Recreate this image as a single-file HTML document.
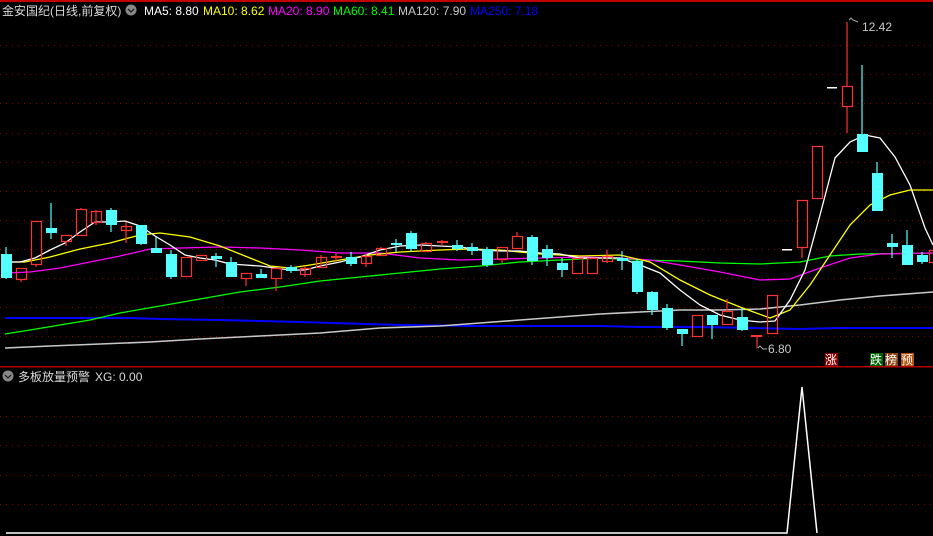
<!DOCTYPE html>
<html><head><meta charset="utf-8"><style>
html,body{margin:0;padding:0;background:#000;width:933px;height:536px;overflow:hidden}
svg{display:block}
text{font-family:"Liberation Sans","Noto Sans CJK SC",sans-serif;font-size:12px}
</style></head><body>
<svg width="933" height="536" viewBox="0 0 933 536" xmlns="http://www.w3.org/2000/svg">
<rect x="0" y="0" width="933" height="536" fill="#000"/>
<rect x="0" y="0" width="933" height="2" fill="#c00000"/>
<g stroke="#900000" stroke-width="1" stroke-dasharray="1,5">
<line x1="0" y1="45.5" x2="933" y2="45.5"/><line x1="0" y1="74.5" x2="933" y2="74.5"/><line x1="0" y1="103.5" x2="933" y2="103.5"/><line x1="0" y1="133.5" x2="933" y2="133.5"/><line x1="0" y1="162.5" x2="933" y2="162.5"/><line x1="0" y1="191.5" x2="933" y2="191.5"/><line x1="0" y1="220.5" x2="933" y2="220.5"/><line x1="0" y1="249.5" x2="933" y2="249.5"/><line x1="0" y1="278.5" x2="933" y2="278.5"/><line x1="0" y1="307.5" x2="933" y2="307.5"/><line x1="0" y1="336.5" x2="933" y2="336.5"/>
<line x1="0" y1="416.5" x2="933" y2="416.5"/><line x1="0" y1="445.5" x2="933" y2="445.5"/><line x1="0" y1="475.5" x2="933" y2="475.5"/><line x1="0" y1="504.5" x2="933" y2="504.5"/>
</g>
<rect x="0" y="366" width="933" height="1.5" fill="#b00000"/>

<g fill="none" stroke-width="1.3">
<polyline stroke="#0000ff" stroke-width="2" points="5,318 130,318 160,319 220,320 300,322 400,325 480,326 600,326 640,327 700,327 800,329 840,328 933,328"/>
<polyline stroke="#c8c8c8" stroke-width="1.6" points="5,348 50,346 100,344 150,342 200,339 260,336 320,333 380,328 440,326 480,323 520,320 560,317 600,314 640,312 680,310 720,310 760,309 800,305 840,300 880,296 933,292"/>
<polyline stroke="#00ff00" points="5,334 30,330 60,325 90,320 120,313 160,306 200,299 240,292 280,287 320,281 360,277 400,273 440,269 480,266 520,262 560,260 600,258 640,260 680,261 720,263 760,264 800,262 830,256 860,254 933,253"/>
<polyline stroke="#ff00ff" points="5,273 30,272 60,268 90,262 120,256 150,249 180,248 220,247 260,248 300,250 340,253 380,253 420,258 460,260 500,259 540,258 580,257 620,258 650,260 680,265 720,272 760,280 790,279 820,268 850,258 880,254 933,253"/>
<polyline stroke="#ffff00" points="5,262 25,262 50,257 80,249 110,243 140,235 160,233 190,237 220,246 250,258 270,266 290,268 310,265 340,260 370,255 400,252 440,250 470,249 500,250 540,254 580,256 620,255 650,262 680,280 710,295 740,307 770,318 790,310 810,285 830,255 850,225 870,205 890,195 910,190 933,190"/>
<polyline stroke="#ffffff" points="5,262 20,262 35,258 50,250 65,243 80,232 95,222 110,222 125,221 140,226 155,236 170,245 185,255 200,258 215,260 230,264 245,265 260,266 275,268 290,270 305,270 320,266 340,262 360,257 380,250 400,246 420,245 440,246 460,247 480,250 500,251 520,251 540,253 560,254 580,258 600,258 620,258 640,265 660,273 680,290 700,305 720,315 740,320 760,322 775,321 790,300 805,270 820,215 835,158 850,142 865,135 880,138 895,157 910,185 925,228 933,245"/>
</g>

<g stroke="#54ffff" stroke-width="1.2">
<line x1="6" y1="247" x2="6" y2="279"/><line x1="51" y1="203" x2="51" y2="239"/><line x1="111" y1="208" x2="111" y2="232"/><line x1="141" y1="225" x2="141" y2="245"/><line x1="156" y1="237" x2="156" y2="253"/><line x1="171" y1="250" x2="171" y2="279"/><line x1="216" y1="253" x2="216" y2="267"/><line x1="231" y1="257" x2="231" y2="277"/><line x1="261" y1="269" x2="261" y2="278"/><line x1="291" y1="265" x2="291" y2="273"/><line x1="351" y1="252" x2="351" y2="266"/><line x1="396" y1="239" x2="396" y2="252"/><line x1="411" y1="231" x2="411" y2="252"/><line x1="457" y1="240" x2="457" y2="251"/><line x1="472" y1="243" x2="472" y2="255"/><line x1="487" y1="247" x2="487" y2="267"/><line x1="532" y1="235" x2="532" y2="265"/><line x1="547" y1="245" x2="547" y2="266"/><line x1="562" y1="258" x2="562" y2="277"/><line x1="622" y1="251" x2="622" y2="270"/><line x1="637" y1="259" x2="637" y2="294"/><line x1="652" y1="291" x2="652" y2="315"/><line x1="667" y1="304" x2="667" y2="330"/><line x1="682" y1="329" x2="682" y2="346"/><line x1="712" y1="315" x2="712" y2="339"/><line x1="742" y1="308" x2="742" y2="331"/><line x1="862" y1="65" x2="862" y2="152"/><line x1="877" y1="162" x2="877" y2="211"/><line x1="892" y1="234" x2="892" y2="258"/><line x1="907" y1="230" x2="907" y2="265"/><line x1="922" y1="252" x2="922" y2="264"/>
</g>
<g fill="#54ffff">
<rect x="1" y="254" width="11" height="24"/><rect x="46" y="228" width="11" height="5"/><rect x="106" y="210" width="11" height="15"/><rect x="136" y="225" width="11" height="19"/><rect x="151" y="248" width="11" height="5"/><rect x="166" y="254" width="11" height="23"/><rect x="211" y="256" width="11" height="3"/><rect x="226" y="262" width="11" height="15"/><rect x="256" y="274" width="11" height="4"/><rect x="286" y="267" width="11" height="4"/><rect x="346" y="257" width="11" height="7"/><rect x="391" y="243" width="11" height="2"/><rect x="406" y="233" width="11" height="16"/><rect x="452" y="245" width="11" height="4"/><rect x="467" y="247" width="11" height="4"/><rect x="482" y="249" width="11" height="16"/><rect x="527" y="237" width="11" height="24"/><rect x="542" y="249" width="11" height="9"/><rect x="557" y="263" width="11" height="7"/><rect x="617" y="258" width="11" height="3"/><rect x="632" y="261" width="11" height="31"/><rect x="647" y="292" width="11" height="18"/><rect x="662" y="308" width="11" height="20"/><rect x="677" y="329" width="11" height="5"/><rect x="707" y="315" width="11" height="10"/><rect x="737" y="317" width="11" height="13"/><rect x="857" y="134" width="11" height="18"/><rect x="872" y="173" width="11" height="38"/><rect x="887" y="243" width="11" height="4"/><rect x="902" y="245" width="11" height="20"/><rect x="917" y="255" width="11" height="7"/>
</g>
<g stroke="#ff3232" stroke-width="1.2" fill="none">
<line x1="21" y1="279" x2="21" y2="282"/><line x1="36" y1="264" x2="36" y2="267"/><line x1="66" y1="241" x2="66" y2="246"/><line x1="81" y1="208" x2="81" y2="209"/><line x1="96" y1="210" x2="96" y2="225"/><line x1="126" y1="222" x2="126" y2="243"/><line x1="246" y1="278" x2="246" y2="286"/><line x1="276" y1="278" x2="276" y2="291"/><line x1="305" y1="266" x2="305" y2="277"/><line x1="321" y1="255" x2="321" y2="267"/><line x1="336" y1="253" x2="336" y2="262"/><line x1="366" y1="254" x2="366" y2="267"/><line x1="381" y1="247" x2="381" y2="248"/><line x1="426" y1="242" x2="426" y2="243"/><line x1="442" y1="240" x2="442" y2="246"/><line x1="502" y1="259" x2="502" y2="263"/><line x1="517" y1="232" x2="517" y2="236"/><line x1="607" y1="250" x2="607" y2="263"/><line x1="727" y1="299" x2="727" y2="311"/><line x1="757" y1="336" x2="757" y2="348"/><line x1="802" y1="247" x2="802" y2="258"/><line x1="847" y1="22" x2="847" y2="86"/><line x1="847" y1="106" x2="847" y2="133"/>
<rect x="16.5" y="268.5" width="10" height="11"/><rect x="31.5" y="221.5" width="10" height="43"/><rect x="61.5" y="235.5" width="10" height="6"/><rect x="76.5" y="209.5" width="10" height="26"/><rect x="91.5" y="211.5" width="10" height="11"/><rect x="121.5" y="226.5" width="10" height="4"/><rect x="181.5" y="257.5" width="10" height="19"/><rect x="196.5" y="255.5" width="10" height="5"/><rect x="241.5" y="273.5" width="10" height="5"/><rect x="271.5" y="268.5" width="10" height="10"/><rect x="300.5" y="268.5" width="10" height="6"/><rect x="316.5" y="257.5" width="10" height="10"/><rect x="361.5" y="256.5" width="10" height="7"/><rect x="376.5" y="248.5" width="10" height="7"/><rect x="421.5" y="243.5" width="10" height="8"/><rect x="497.5" y="247.5" width="10" height="12"/><rect x="512.5" y="236.5" width="10" height="12"/><rect x="572.5" y="258.5" width="10" height="15"/><rect x="587.5" y="258.5" width="10" height="15"/><rect x="602.5" y="256.5" width="10" height="5"/><rect x="692.5" y="315.5" width="10" height="21"/><rect x="722.5" y="311.5" width="10" height="13"/><rect x="767.5" y="295.5" width="10" height="38"/><rect x="797.5" y="200.5" width="10" height="47"/><rect x="812.5" y="146.5" width="10" height="52"/><rect x="842.5" y="86.5" width="10" height="20"/><rect x="929.5" y="250.5" width="10" height="12"/>
</g>
<g fill="#ff3232"><rect x="331" y="256" width="11" height="2"/><rect x="437" y="241" width="11" height="2"/><rect x="751" y="335" width="11" height="2"/></g>
<g fill="#fff"><rect x="782" y="249" width="10" height="1.5"/><rect x="827" y="87" width="10" height="1.5"/></g>

<g stroke="#aaa" fill="none" stroke-width="1"><polyline points="849,20 851,18 853,20 858,22"/><polyline points="758,348 760,346 763,349 767,349"/></g>
<text x="862" y="31" fill="#c8c8c8">12.42</text>
<text x="768" y="353" fill="#c8c8c8">6.80</text>

<rect x="825" y="353" width="13" height="13" fill="#8b0000"/><text x="825" y="364" fill="#fff">涨</text>
<rect x="870" y="353" width="13" height="13" fill="#006400"/><text x="870" y="364" fill="#fff">跌</text>
<rect x="885" y="353" width="13" height="13" fill="#8b4513"/><text x="885" y="364" fill="#fff">榜</text>
<rect x="901" y="353" width="13" height="13" fill="#b8500a"/><text x="901" y="364" fill="#fff">预</text>

<text x="2" y="15" fill="#d8d8d8">金安国纪(日线,前复权)</text>
<circle cx="131" cy="10" r="5.5" fill="#888"/><polyline points="128,9 131,12 134,9" fill="none" stroke="#222" stroke-width="1.3"/>
<text x="144" y="15" fill="#ffffff">MA5: 8.80</text>
<text x="203" y="15" fill="#ffff00">MA10: 8.62</text>
<text x="268" y="15" fill="#ff00ff">MA20: 8.90</text>
<text x="333" y="15" fill="#00ff00">MA60: 8.41</text>
<text x="398" y="15" fill="#c8c8c8">MA120: 7.90</text>
<text x="470" y="15" fill="#0000ff">MA250: 7.18</text>

<circle cx="8" cy="376" r="5.5" fill="#888"/><polyline points="5,375 8,378 11,375" fill="none" stroke="#222" stroke-width="1.3"/>
<text x="18" y="381" fill="#d8d8d8">多板放量预警</text>
<text x="95" y="381" fill="#d8d8d8">XG: 0.00</text>
<polyline points="6,533 787,533 802,387 817,533" fill="none" stroke="#fff" stroke-width="1.5"/>
</svg>
</body></html>
